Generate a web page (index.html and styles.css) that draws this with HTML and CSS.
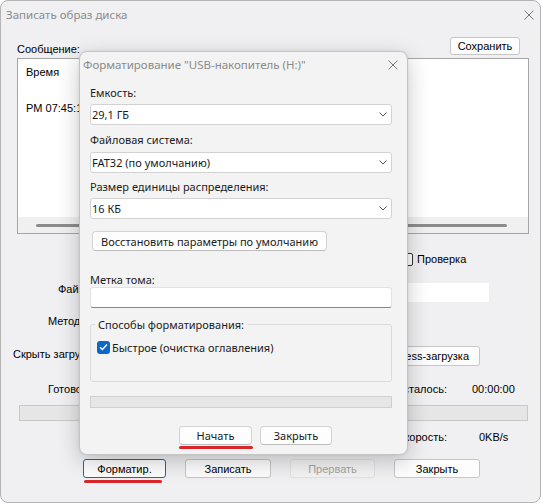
FILE: index.html
```html
<!DOCTYPE html>
<html lang="ru">
<head>
<meta charset="utf-8">
<title>Записать образ диска</title>
<link rel="stylesheet" href="styles.css">
</head>
<body>
<div class="win">
  <div class="titlebar">
    <span class="title">Записать образ диска</span>
    <svg class="xbtn" width="10" height="10" viewBox="0 0 10 10"><path d="M0.5 0.5 L9.5 9.5 M9.5 0.5 L0.5 9.5" stroke="#7a7a7a" stroke-width="1" fill="none"/></svg>
  </div>
  <div class="content">
    <div class="msg-head">
      <span class="msg-label">Сообщение:</span>
      <button class="cbtn save">Сохранить</button>
    </div>
    <div class="log">
      <div class="log-body">
        <div class="log-line">Время</div>
        <div class="log-line second">PM 07:45:13</div>
      </div>
      <div class="hscroll"><div class="thumb"></div></div>
    </div>
    <div class="row r-check">
      <span class="cbox"></span><span class="cbox-label">Проверка</span>
    </div>
    <div class="row r-file">
      <span class="rlabel l-file">Файл образа:</span>
      <div class="file-input"></div>
    </div>
    <div class="row r-method">
      <span class="rlabel l-method">Метод записи:</span>
    </div>
    <div class="row r-hide">
      <span class="rlabel l-hide">Скрыть загрузочный раздел:</span>
      <button class="cbtn express">Express-загрузка</button>
    </div>
    <div class="row r-done">
      <span class="rlabel l-done">Готово:</span>
      <span class="stat-label">Осталось:</span>
      <span class="stat-val v-time">00:00:00</span>
    </div>
    <div class="progress"></div>
    <div class="row r-speed">
      <span class="stat-label">Скорость:</span>
      <span class="stat-val v-speed">0KB/s</span>
    </div>
    <div class="btn-row">
      <button class="cbtn b-format mark">Форматир.</button>
      <button class="cbtn b-write">Записать</button>
      <button class="cbtn b-abort" disabled>Прервать</button>
      <button class="cbtn b-close">Закрыть</button>
    </div>
  </div>

  <div class="dlg">
    <div class="dlg-title">
      <span class="dlg-title-text">Форматирование "USB-накопитель (H:)"</span>
      <svg class="dlg-x" width="10" height="10" viewBox="0 0 10 10"><path d="M0.5 0.5 L9.5 9.5 M9.5 0.5 L0.5 9.5" stroke="#7a7a7a" stroke-width="1" fill="none"/></svg>
    </div>
    <div class="dlg-body">
      <div class="lbl l1">Емкость:</div>
      <div class="combo c1"><span class="combo-text">29,1 ГБ</span><svg class="chev" width="8" height="5" viewBox="0 0 8 5"><path d="M0.5 0.5 L4 4 L7.5 0.5" stroke="#555" stroke-width="1" fill="none"/></svg></div>
      <div class="lbl l2">Файловая система:</div>
      <div class="combo c2"><span class="combo-text">FAT32 (по умолчанию)</span><svg class="chev" width="8" height="5" viewBox="0 0 8 5"><path d="M0.5 0.5 L4 4 L7.5 0.5" stroke="#555" stroke-width="1" fill="none"/></svg></div>
      <div class="lbl l3">Размер единицы распределения:</div>
      <div class="combo c3"><span class="combo-text">16 КБ</span><svg class="chev" width="8" height="5" viewBox="0 0 8 5"><path d="M0.5 0.5 L4 4 L7.5 0.5" stroke="#555" stroke-width="1" fill="none"/></svg></div>
      <button class="wbtn restore">Восстановить параметры по умолчанию</button>
      <div class="lbl l4">Метка тома:</div>
      <div class="field"></div>
      <div class="group">
        <span class="legend">Способы форматирования:</span>
        <div class="chk">
          <span class="chk-box"><svg width="9" height="8" viewBox="0 0 9 8"><path d="M1 4.2 L3.4 6.5 L8 1.5" stroke="#fff" stroke-width="1.3" fill="none"/></svg></span>
          <span class="chk-text">Быстрое (очистка оглавления)</span>
        </div>
      </div>
      <div class="dprog"></div>
      <div class="dlg-btns">
        <button class="wbtn start mark">Начать</button>
        <button class="wbtn dclose">Закрыть</button>
      </div>
    </div>
  </div>
</div>
</body>
</html>
```

FILE: styles.css
```css
html, body {
  margin: 0;
  padding: 0;
  background: #ffffff;
}

.win {
  position: relative;
  width: 539px;
  height: 501px;
  border: 1px solid #b4b4b4;
  border-radius: 8px;
  background: #f0eff2;
  overflow: hidden;
  font-family: "Liberation Sans", Arial, sans-serif;
  font-size: 11px;
  color: #000;
}

.titlebar {
  height: 27px;
  display: flex;
  align-items: center;
  justify-content: space-between;
  padding: 0 6px 0 5px;
}

.title {
  font-family: "Noto Sans", sans-serif;
  font-size: 11.5px;
  color: #8a8a8a;
}

.content {
  padding: 0 11px 0 16px;
}

.msg-head {
  height: 30px;
  display: flex;
  align-items: flex-end;
  justify-content: space-between;
}

.msg-label {
  line-height: 16px;
  padding-bottom: 1px;
}

.cbtn {
  font-family: "Liberation Sans", Arial, sans-serif;
  font-size: 11px;
  color: #000;
  background: #fdfdfd;
  border: 1px solid #c6c6c6;
  border-radius: 3px;
  padding: 0;
  box-sizing: border-box;
  position: relative;
}

.save {
  width: 70px;
  height: 18px;
  margin: 0 9px 3px 0;
}

.log {
  height: 176px;
  box-sizing: border-box;
  border: 1px solid #a6a6a6;
  background: #fff;
  display: flex;
  flex-direction: column;
}

.log-body {
  flex: 1;
  padding: 5px 8px 0;
}

.log-line {
  line-height: 16px;
}

.log-line.second {
  margin-top: 20px;
}

.hscroll {
  height: 16px;
  background: #f0f0f0;
  display: flex;
  align-items: center;
  padding: 0 21px 0 18px;
}

.thumb {
  flex: 1;
  height: 3px;
  border-radius: 2px;
  background: #8c8c8c;
}

.row {
  display: flex;
  align-items: center;
  height: 18px;
}

.r-check {
  margin-top: 16px;
}

.cbox {
  width: 11px;
  height: 11px;
  border: 1px solid #333;
  border-radius: 2px;
  margin-left: 383px;
  background: #fff;
}

.cbox-label {
  margin-left: 4px;
}

.r-file {
  margin-top: 13px;
  height: 21px;
  align-items: flex-start;
}

.rlabel {
  line-height: 14px;
  white-space: nowrap;
  overflow: hidden;
  flex: none;
}

.l-file {
  margin-left: 41px;
  margin-top: 1px;
  width: 21px;
}

.file-input {
  margin-left: auto;
  margin-right: 40px;
  margin-top: 2px;
  width: 200px;
  height: 19px;
  background: #fff;
}

.r-method {
  margin-top: 10px;
}

.l-method {
  margin-left: 31px;
  width: 31px;
}

.r-hide {
  margin-top: 16px;
  height: 20px;
  align-items: flex-start;
}

.l-hide {
  margin-left: -4px;
  margin-top: 1px;
  width: 66px;
}

.express {
  margin-left: auto;
  margin-right: 49px;
  height: 20px;
  padding: 0 10px 0 10px;
}

.r-done {
  margin-top: 14px;
}

.l-done {
  margin-left: 31px;
  width: 31px;
}

.stat-label {
  margin-left: auto;
  width: 90px;
  text-align: right;
}

.stat-val {
  width: 57px;
  margin-left: 25px;
  box-sizing: border-box;
}

.v-speed {
  padding-left: 7px;
}

.progress {
  margin: 7px 1px 0 2px;
  height: 16px;
  box-sizing: border-box;
  border: 1px solid #c8c8c8;
  background: #e6e6e6;
}

.r-speed {
  margin-top: 7px;
}

.btn-row {
  margin-top: 13px;
  display: flex;
  gap: 19px;
  padding-left: 66px;
}

.btn-row .cbtn {
  height: 19px;
}

.b-format {
  width: 83px;
  border-color: #1a66c0;
}

.b-write {
  width: 86px;
}

.b-abort {
  width: 85px;
  color: #a3a3a3;
  background: #f3f3f3;
  border-color: #e2e2e2;
}

.b-close {
  width: 86px;
}

.mark::after {
  content: "";
  position: absolute;
  left: 0;
  height: 3px;
  border-radius: 2px;
  background: #d8262b;
}

.b-format.mark::after {
  width: 78px;
  bottom: -6px;
}

/* format dialog */
.dlg {
  position: absolute;
  left: 78px;
  top: 50px;
  width: 329px;
  height: 404px;
  box-sizing: border-box;
  border: 1px solid #c4c4c4;
  border-radius: 8px;
  background: #f3f3f3;
  box-shadow: 0 6px 22px rgba(0, 0, 0, 0.22), 0 0 3px rgba(0, 0, 0, 0.08);
  font-family: "Noto Sans", sans-serif;
  font-size: 11px;
  color: #1b1b1b;
}

.dlg-title {
  height: 25px;
  display: flex;
  align-items: center;
  justify-content: space-between;
  padding: 0 9px 0 3px;
}

.dlg-title-text {
  color: #8a8a8a;
  font-size: 11.5px;
}

.dlg-body {
  padding: 0 15px 0 10px;
}

.lbl {
  line-height: 16px;
}

.l1 { margin-top: 8px; }
.l2 { margin-top: 7px; }
.l3 { margin-top: 6px; }
.l4 { margin-top: 21px; }

.combo {
  height: 21px;
  box-sizing: border-box;
  border: 1px solid #d2d2d2;
  border-radius: 3px;
  background: #fff;
  display: flex;
  align-items: center;
  justify-content: space-between;
  padding: 0 4px 0 1px;
}

.c1 { margin-top: 3px; }
.c2 { margin-top: 4px; }
.c3 { margin-top: 3px; }

.wbtn {
  font-family: "Noto Sans", sans-serif;
  font-size: 11px;
  color: #1b1b1b;
  background: #fdfdfd;
  border: 1px solid #d3d3d3;
  border-bottom-color: #bdbdbd;
  border-radius: 4px;
  padding: 0;
  box-sizing: border-box;
  position: relative;
}

.restore {
  display: block;
  margin: 12px 0 0 2px;
  width: 235px;
  height: 20px;
}

.field {
  margin-top: -1px;
  height: 21px;
  box-sizing: border-box;
  background: #fff;
  border: 1px solid #e2e2e2;
  border-bottom-color: #858585;
  border-radius: 3px;
}

.group {
  margin-top: 16px;
  height: 58px;
  box-sizing: border-box;
  border: 1px solid #dadada;
  border-radius: 3px;
}

.legend {
  display: table;
  margin: -8px 0 0 4px;
  padding: 0 3px;
  line-height: 16px;
  background: #f3f3f3;
}

.chk {
  display: flex;
  align-items: center;
  height: 16px;
  margin: 6px 0 0 6px;
  gap: 2px;
}

.chk-box {
  width: 13px;
  height: 13px;
  border-radius: 3px;
  background: #0f67c6;
  display: flex;
  align-items: center;
  justify-content: center;
}

.dprog {
  margin-top: 14px;
  height: 12px;
  box-sizing: border-box;
  border: 1px solid #d0d0d0;
  background: #e6e6e6;
}

.dlg-btns {
  margin-top: 18px;
  display: flex;
  gap: 8px;
  padding-left: 89px;
}

.dlg-btns .wbtn {
  height: 19px;
}

.start {
  width: 73px;
}

.dclose {
  width: 72px;
}

.start.mark::after {
  width: 74px;
  left: -1px;
  bottom: -5px;
}
```
